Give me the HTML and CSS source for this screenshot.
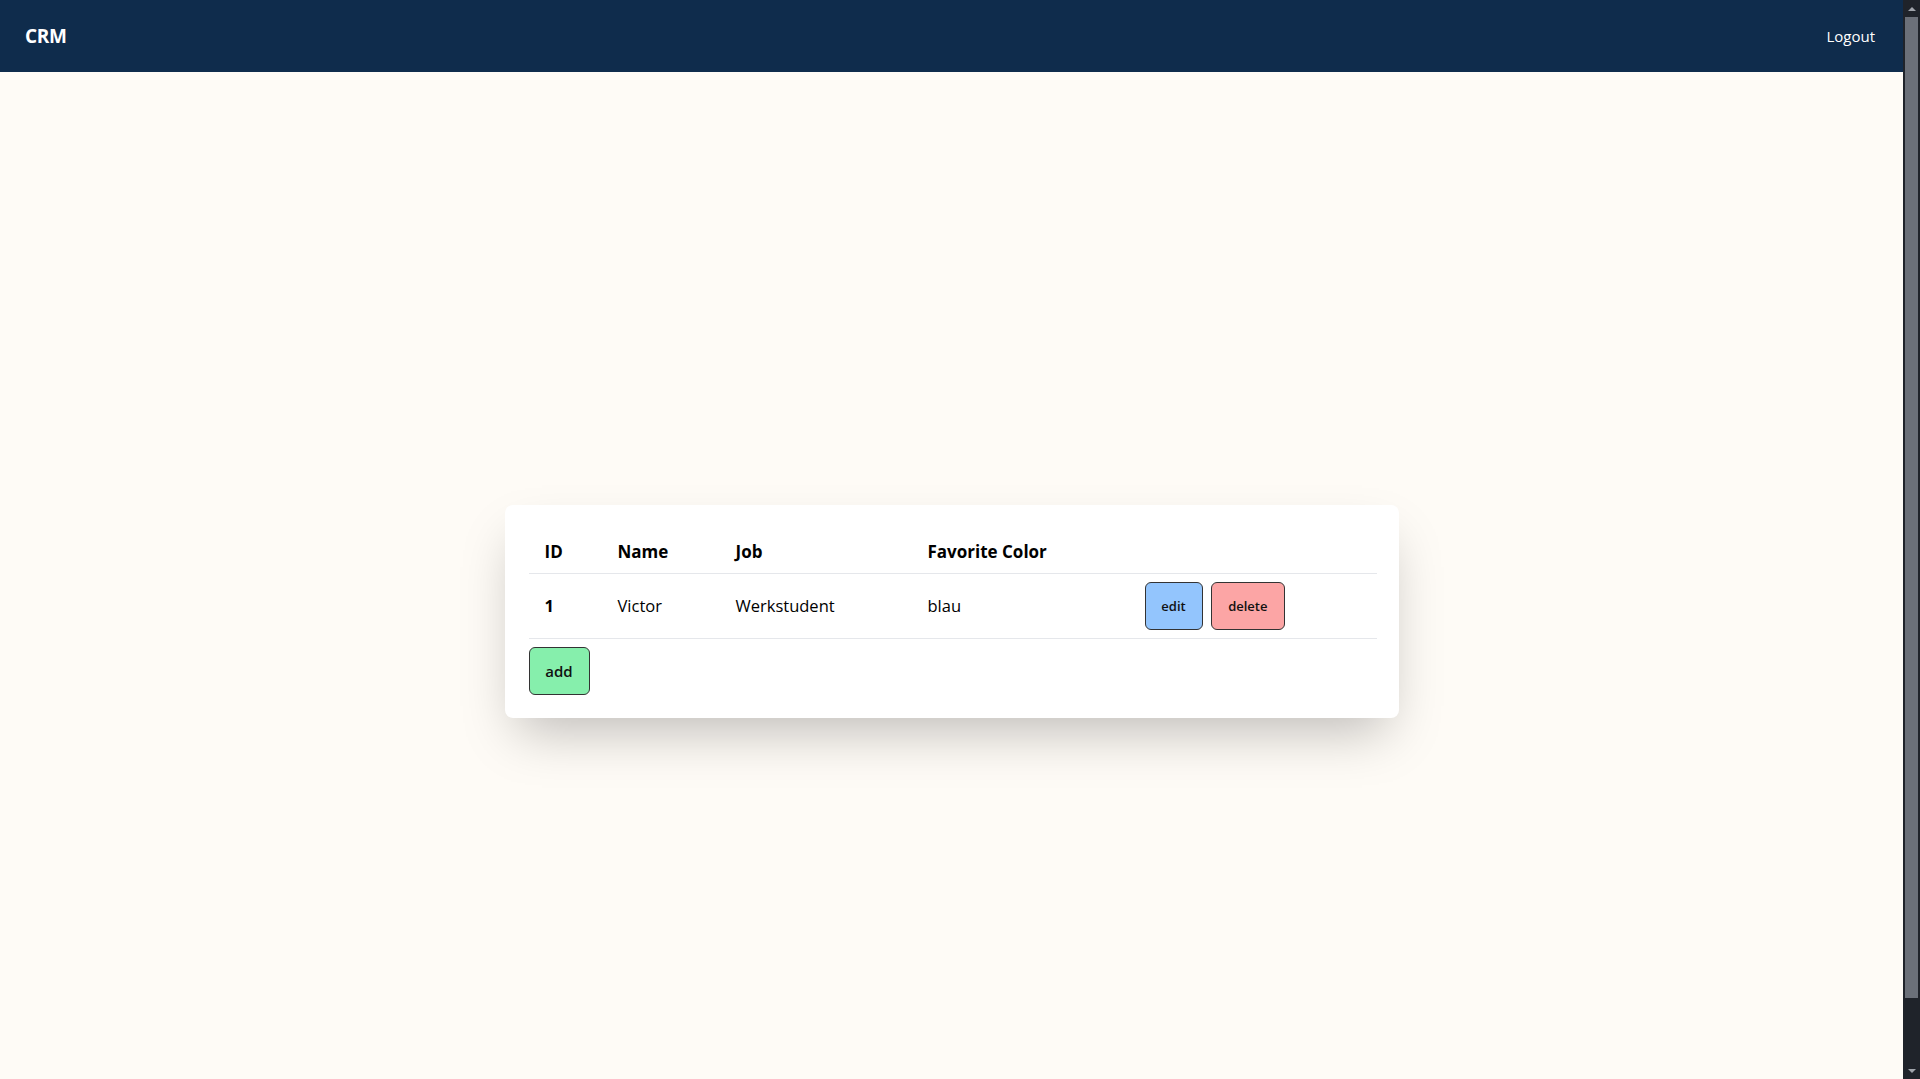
FILE: index.html
```html
<!DOCTYPE html>
<html lang="en">
<head>
<meta charset="utf-8">
<title>CRM</title>
<link rel="stylesheet" href="styles.css">
</head>
<body>
<div class="app">
  <nav class="navbar">
    <a class="brand" href="#">CRM</a>
    <a class="logout" href="#">Logout</a>
  </nav>
  <main class="main">
    <section class="card">
      <table class="crm-table">
        <thead>
          <tr>
            <th class="col-id">ID</th>
            <th class="col-name">Name</th>
            <th class="col-job">Job</th>
            <th class="col-color">Favorite Color</th>
            <th class="col-actions"></th>
          </tr>
        </thead>
        <tbody>
          <tr>
            <td class="cell-id">1</td>
            <td>Victor</td>
            <td>Werkstudent</td>
            <td>blau</td>
            <td class="actions">
              <button class="btn btn-edit">edit</button>
              <button class="btn btn-delete">delete</button>
            </td>
          </tr>
        </tbody>
      </table>
      <div class="footer-row">
        <button class="btn btn-add">add</button>
      </div>
    </section>
  </main>
</div>
<div class="scrollbar" aria-hidden="true">
  <div class="sb-btn"><span class="arrow-up"></span></div>
  <div class="sb-track"><div class="sb-thumb"></div></div>
  <div class="sb-btn"><span class="arrow-down"></span></div>
</div>
</body>
</html>
```

FILE: styles.css
```css
html, body {
  margin: 0;
  padding: 0;
}
body {
  background: #fefbf6;
  font-family: "Open Sans", "Noto Sans", sans-serif;
  color: #000;
  display: flex;
  height: 100vh;
  overflow: hidden;
}
.app {
  flex: 1;
  min-width: 0;
  overflow: hidden;
}

/* fake scrollbar */
.scrollbar {
  width: 17px;
  flex: 0 0 17px;
  background: #1f232a;
  display: flex;
  flex-direction: column;
}
.sb-btn {
  height: 17px;
  display: flex;
  align-items: center;
  justify-content: center;
}
.sb-track {
  flex: 1;
  padding: 0 2px;
}
.sb-thumb {
  height: 981px;
  background: #6b7079;
}
.arrow-up {
  width: 0;
  height: 0;
  border-left: 4px solid transparent;
  border-right: 4px solid transparent;
  border-bottom: 4px solid #a0a4ab;
}
.arrow-down {
  width: 0;
  height: 0;
  border-left: 4px solid transparent;
  border-right: 4px solid transparent;
  border-top: 4px solid #a0a4ab;
}

.navbar {
  height: 72px;
  background: #0f2c4c;
  display: flex;
  align-items: center;
  justify-content: space-between;
  padding: 0 28px 0 25px;
}
.brand {
  color: #fff;
  text-decoration: none;
  font-weight: 700;
  font-size: 19px;
  letter-spacing: -0.3px;
}
.logout {
  color: #fff;
  text-decoration: none;
  font-size: 15px;
}

.main {
  min-height: 100vh;
  display: flex;
  align-items: center;
  justify-content: center;
}
.card {
  width: 894px;
  box-sizing: border-box;
  background: #fff;
  border-radius: 8px;
  padding: 24px 22px 23px 24px;
  box-shadow: 0 25px 50px -12px rgba(0, 0, 0, 0.25);
}
.crm-table {
  width: 848px;
  border-collapse: collapse;
  font-size: 16.5px;
}
.crm-table th {
  text-align: left;
  font-weight: 700;
  font-size: 17px;
  height: 44px;
  padding: 0 16px;
  box-sizing: border-box;
  border-bottom: 1px solid #e5e7eb;
  vertical-align: middle;
}
.crm-table td {
  height: 65px;
  padding: 0 16px;
  box-sizing: border-box;
  border-bottom: 1px solid #e5e7eb;
  vertical-align: middle;
}
.col-id { width: 73px; }
.col-name { width: 118px; }
.col-job { width: 192px; }
.col-color { width: 217px; }
.cell-id { font-weight: 700; }
.btn {
  font-family: inherit;
  color: #111;
  border: 1px solid #333;
  border-radius: 6px;
  cursor: pointer;
  box-sizing: border-box;
  height: 48px;
  padding: 0;
}
.btn-edit {
  width: 58px;
  background: #93c5fd;
  font-size: 13px;
  font-weight: 600;
}
.btn-delete {
  width: 74px;
  margin-left: 4px;
  background: #fca5a5;
  font-size: 13px;
  font-weight: 600;
}
.footer-row {
  padding-top: 8px;
}
.btn-add {
  width: 61px;
  background: #86efac;
  font-size: 15px;
  font-weight: 600;
}
```
